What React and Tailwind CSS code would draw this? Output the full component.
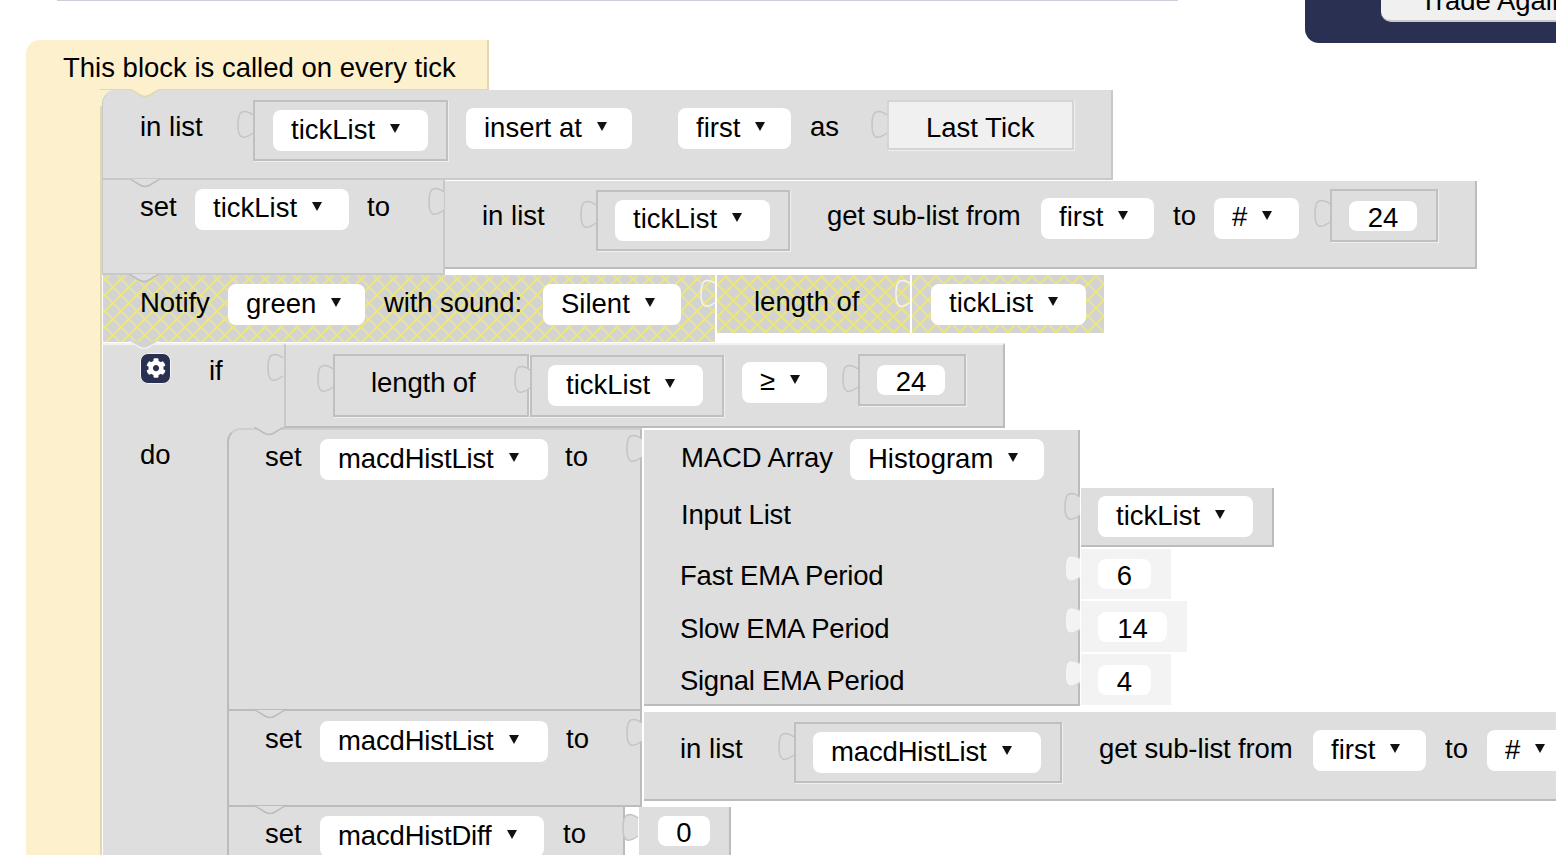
import React from 'react';
import { FaCog } from 'react-icons/fa';

const patternBg =
    'bg-[#d3d3d3] bg-[image:repeating-linear-gradient(45deg,#e8e48e_0,#e8e48e_2px,transparent_2px,transparent_11.3px),repeating-linear-gradient(-45deg,#e8e48e_0,#e8e48e_2px,transparent_2px,transparent_11.3px)]';

const Block = ({ className = '', children }) => (
    <div className={`relative shrink-0 flex bg-[#dedede] border-r-2 border-b-2 border-[#bcbcbc] ${className}`}>
        {children}
    </div>
);

const Inset = ({ className = '', children }) => (
    <div className={`relative shrink-0 flex items-center border-2 shadow-[1px_1px_0_#efefef] ${className}`}>
        {children}
        <Tab className="-left-[18px] top-[6px]" />
    </div>
);

const Label = ({ className = '', children }) => (
    <span className={`shrink-0 whitespace-nowrap pb-[5px] ${className}`}>{children}</span>
);

const Field = ({ className = '', children }) => (
    <div className={`shrink-0 flex items-center h-[41px] pl-[18px] bg-white rounded-lg whitespace-nowrap ${className}`}>
        <span className="pb-[3px]">{children}</span>
        <svg className="w-[10px] h-[9px] ml-[15px] mb-[5px]" viewBox="0 0 10 9">
            <polygon points="0,0 10,0 5,9" fill="#111" />
        </svg>
    </div>
);

const Num = ({ className = '', children }) => (
    <div className={`shrink-0 flex items-center justify-center h-[30px] pt-[3px] bg-white rounded-lg ${className}`}>
        {children}
    </div>
);

// puzzle tab on the left edge of a value block
const Tab = ({ className = '', fill = '#dedede', stroke = '#c4c4c4' }) => (
    <svg className={`absolute w-[17px] h-[30px] ${className}`} viewBox="0 0 17 30">
        <path d="M16 7 C12 4 8 3 5 4 C2 5 1 12 1 17 C1 23 2 28 5 29 C8 30 12 28 16 25 Z" fill={fill} />
        <path d="M16 7 C12 4 8 3 5 4 C2 5 1 12 1 17 C1 23 2 28 5 29 C8 30 12 28 16 25" fill="none" stroke={stroke} strokeWidth="1.5" />
    </svg>
);

// notch on the top edge of a statement block
const Notch = ({ className = '', fill = '#dedede', stroke = '#bcbcbc' }) => (
    <svg className={`absolute w-[30px] h-[9px] ${className}`} viewBox="0 0 30 9">
        <path d="M0 0 L10 6 Q15 9 20 6 L30 0 Z" fill={fill} />
        <path d="M0 0 L10 6 Q15 9 20 6 L30 0" fill="none" stroke={stroke} strokeWidth="1.5" />
    </svg>
);

const NumValue = ({ className = '', fieldWidth, children }) => (
    <div className={`relative flex items-center pl-[17px] bg-[#f3f3f3] ${className}`}>
        <Num className={fieldWidth}>{children}</Num>
        <Tab className="-left-[17px] top-[3px]" fill="#f3f3f3" stroke="#dcdcdc" />
    </div>
);

const App = () => {
    return (
        <div className="relative w-[1556px] h-[855px] overflow-hidden bg-white text-[27.5px] leading-[27px] text-black font-['Liberation_Sans',sans-serif]">
            {/* top of the page above the workspace */}
            <div className="flex justify-between h-[40px] pl-[57px]">
                <div className="w-[1121px] h-px bg-[#cfcfdc]" />
                <div className="w-[251px] h-[43px] pl-[76px] bg-[#2a3052] rounded-bl-[14px]">
                    <div className="flex items-end h-[22px] pl-[39px] pb-[6px] bg-[#f0f0f0] border-b-2 border-[#c8c8c8] rounded-bl-[10px] overflow-hidden">
                        <span className="whitespace-nowrap">Trade Again</span>
                    </div>
                </div>
            </div>

            <div className="ml-[26px]">
                {/* hat block */}
                <div className="flex items-center w-[463px] h-[50px] pl-[37px] pt-[4px] bg-[#fdf0cd] rounded-tl-[14px] border-r-2 border-[#e3d7b2]">
                    <span className="whitespace-nowrap">This block is called on every tick</span>
                </div>

                <div className="flex">
                    <div className="relative shrink-0 w-[76px] bg-[#fdf0cd] border-r-2 border-[#e3d7b2]">
                        <div className="absolute -right-[16px] top-0 w-[16px] h-[16px] bg-[#fdf0cd]" />
                        <div className="absolute left-[74px] -top-px w-[387px] h-px bg-[#e3d7b2]" />
                    </div>

                    <div className="flex flex-col w-max">
                        {/* in list ... insert at */}
                        <Block className="w-[1011px] h-[90px] items-center pl-[37px] pb-[11px] rounded-tl-[14px] border-l border-[#c9c9c9]">
                            <Label className="w-[113px]">in list</Label>
                            <Inset className="w-[195px] h-[61px] mt-[4px] pl-[18px] border-[#c0c0c0]">
                                <Field className="w-[155px]">tickList</Field>
                            </Inset>
                            <Field className="w-[166px] ml-[18px]">insert at</Field>
                            <Field className="w-[113px] ml-[46px]">first</Field>
                            <Label className="w-[77px] ml-[19px]">as</Label>
                            <Inset className="w-[187px] h-[50px] mb-[7px] pl-[37px] bg-[#f0f0f0] border-[#d4d4d4]">
                                <span className="mt-[4px] whitespace-nowrap">Last Tick</span>
                            </Inset>
                            <Notch className="left-[27px] -top-px" fill="#fdf0cd" stroke="#e3d7b2" />
                        </Block>

                        {/* set tickList */}
                        <div className="flex items-start h-[95px]">
                            <Block className="w-[343px] h-[95px] items-center pl-[37px] pb-[35px] border-l border-[#c9c9c9]">
                                <Label className="w-[55px]">set</Label>
                                <Field className="w-[154px]">tickList</Field>
                                <Label className="ml-[18px]">to</Label>
                                <Notch className="left-[27px] -top-px" />
                            </Block>
                            <Block className="w-[1032px] h-[88px] mt-px items-center pl-[37px] pb-[12px]">
                                <Label className="w-[114px]">in list</Label>
                                <Inset className="w-[194px] h-[61px] mt-[4px] pl-[17px] border-[#c0c0c0]">
                                    <Field className="w-[155px]">tickList</Field>
                                </Inset>
                                <Label className="w-[214px] ml-[37px] tracking-[-0.12px]">get sub-list from</Label>
                                <Field className="w-[113px]">first</Field>
                                <Label className="w-[41px] ml-[19px]">to</Label>
                                <Field className="w-[85px]">#</Field>
                                <Inset className="w-[108px] h-[53px] ml-[31px] mb-[5px] pl-[17px] border-[#c0c0c0]">
                                    <Num className="w-[68px]">24</Num>
                                </Inset>
                                <Tab className="-left-[17px] top-[4px]" />
                            </Block>
                        </div>

                        {/* notify, the hatched blocks are disabled */}
                        <div className="flex items-start h-[68px] ml-px">
                            <div className={`relative shrink-0 flex items-center w-[612px] h-[67px] pl-[37px] pb-[8px] ${patternBg}`}>
                                <Label className="w-[88px] tracking-[-0.1px]">Notify</Label>
                                <Field className="w-[137px]">green</Field>
                                <Label className="w-[159px] ml-[19px] tracking-[-0.1px]">with sound:</Label>
                                <Field className="w-[138px]">Silent</Field>
                                <Notch className="left-[26px] -top-px" />
                                <Notch className="left-[26px] -bottom-[8px]" fill="#d3d3d3" stroke="#f0f0f0" />
                            </div>
                            <div className={`relative shrink-0 flex items-center w-[193px] h-[58px] ml-[2px] pl-[37px] ${patternBg}`}>
                                <Label>length of</Label>
                                <Tab className="-left-[17px] top-[2px]" fill="transparent" stroke="#f4f4f4" />
                            </div>
                            <div className={`relative shrink-0 flex items-center w-[192px] h-[58px] ml-[2px] pl-[19px] ${patternBg}`}>
                                <Field className="w-[155px]">tickList</Field>
                                <Tab className="-left-[17px] top-[2px]" fill="transparent" stroke="#f4f4f4" />
                            </div>
                        </div>

                        {/* if / do */}
                        <div className="flex items-start ml-px h-[85px]">
                            <div className="shrink-0 flex items-center w-[181px] h-[85px] pl-[37px] pb-[37px] bg-[#dedede] border-t-2 border-[#f2f2f2]">
                                <div className="flex items-center justify-center w-[31px] h-[31px] bg-[#2a3052] border border-[#f4f4f4] rounded-lg">
                                    <FaCog className="w-[20px] h-[20px] text-white" />
                                </div>
                                <span className="ml-[38px] mt-[5px]">if</span>
                            </div>
                            <Block className="w-[721px] h-[85px] items-center pl-[47px] border-t-2 border-l-2 border-t-[#f2f2f2] border-l-[#c8c8c8]">
                                <Tab className="-left-[19px] top-[6px]" />
                                <Inset className="w-[196px] h-[63px] pl-[36px] border-[#c0c0c0]">
                                    <span className="pb-[7px] whitespace-nowrap tracking-[-0.1px]">length of</span>
                                </Inset>
                                <Inset className="w-[194px] h-[62px] ml-px pl-[16px] border-[#c0c0c0]">
                                    <Field className="w-[155px]">tickList</Field>
                                </Inset>
                                <Field className="w-[85px] ml-[18px] mb-[7px]">≥</Field>
                                <Inset className="w-[108px] h-[52px] ml-[31px] mb-[12px] pl-[17px] border-[#c0c0c0]">
                                    <Num className="w-[68px]">24</Num>
                                </Inset>
                            </Block>
                        </div>

                        <div className="flex">
                            <div className="shrink-0 w-[126px] ml-px pl-[37px] pt-[13px] bg-[#dedede] border-r-2 border-[#bcbcbc]">
                                do
                            </div>

                            <div className="flex flex-col">
                                {/* set macdHistList to MACD Array */}
                                <div className="relative flex items-start h-[283px] -ml-[2px]">
                                    <div className="absolute left-0 top-0 w-[16px] h-[16px] bg-[#dedede]" />
                                    <Block className="w-[415px] h-[283px] items-start pl-[36px] pt-[11px] rounded-tl-[14px] border-l-2 border-t-2 border-t-[#cfcfcf]">
                                        <Label className="w-[55px] mt-[2px]">set</Label>
                                        <Field className="w-[228px] -mt-[2px] tracking-[-0.15px]">macdHistList</Field>
                                        <Label className="ml-[17px] mt-[2px]">to</Label>
                                        <Notch className="left-[25px] -top-[3px]" />
                                    </Block>
                                    <div className="relative shrink-0 w-[436px] h-[276px] ml-[2px] mt-[2px] bg-[#dedede] border-r-2 border-b-2 border-[#bcbcbc]">
                                        <Tab className="-left-[18px] top-[2px]" />
                                        <div className="flex items-center h-[41px] mt-[9px] pl-[37px]">
                                            <Label className="w-[169px] tracking-[-0.1px]">MACD Array</Label>
                                            <Field className="w-[194px]">Histogram</Field>
                                        </div>
                                        <div className="flex flex-col pl-[36px] pt-[18px] tracking-[-0.2px]">
                                            <span className="h-[64px] pt-[3px] pl-px">Input List</span>
                                            <span className="h-[53px]">Fast EMA Period</span>
                                            <span className="h-[52px]">Slow EMA Period</span>
                                            <span className="tracking-[-0.3px]">Signal EMA Period</span>
                                        </div>
                                    </div>
                                    <div className="flex flex-col gap-[2px] ml-px pt-[60px]">
                                        <Block className="w-[193px] h-[59px] items-center pl-[17px]">
                                            <Field className="w-[155px]">tickList</Field>
                                            <Tab className="-left-[17px] top-[2px]" />
                                        </Block>
                                        <NumValue className="w-[90px] h-[50px]" fieldWidth="w-[53px]">6</NumValue>
                                        <NumValue className="w-[106px] h-[51px]" fieldWidth="w-[69px]">14</NumValue>
                                        <NumValue className="w-[90px] h-[51px]" fieldWidth="w-[53px]">4</NumValue>
                                    </div>
                                </div>

                                {/* set macdHistList to sub-list */}
                                <div className="flex items-start h-[96px]">
                                    <Block className="w-[413px] h-[96px] items-start pl-[36px] pt-[10px]">
                                        <Label className="w-[55px] mt-[4px]">set</Label>
                                        <Field className="w-[228px] tracking-[-0.15px]">macdHistList</Field>
                                        <Label className="ml-[18px] mt-[4px]">to</Label>
                                        <Notch className="left-[26px] -top-px" />
                                    </Block>
                                    <Block className="w-[920px] h-[89px] ml-[2px] mt-px items-center pl-[36px] pb-[10px]">
                                        <Tab className="-left-[18px] top-[4px]" />
                                        <Label className="w-[114px]">in list</Label>
                                        <Inset className="w-[268px] h-[61px] mt-[4px] pl-[17px] border-[#c0c0c0]">
                                            <Field className="w-[228px] tracking-[-0.15px]">macdHistList</Field>
                                        </Inset>
                                        <Label className="w-[214px] ml-[37px] tracking-[-0.12px]">get sub-list from</Label>
                                        <Field className="w-[113px]">first</Field>
                                        <Label className="w-[42px] ml-[19px]">to</Label>
                                        <Field className="w-[85px]">#</Field>
                                    </Block>
                                </div>

                                {/* set macdHistDiff to 0 */}
                                <div className="flex items-start">
                                    <Block className="w-[396px] h-[60px] items-start pl-[36px] pt-[9px]">
                                        <Label className="w-[55px] mt-[4px]">set</Label>
                                        <Field className="w-[224px] tracking-[-0.15px]">macdHistDiff</Field>
                                        <Label className="ml-[19px] mt-[4px]">to</Label>
                                        <Notch className="left-[26px] -top-px" />
                                    </Block>
                                    <Block className="w-[92px] h-[60px] ml-[14px] items-start pl-[19px] pt-[9px]">
                                        <Num className="w-[52px]">0</Num>
                                        <Tab className="-left-[17px] top-[4px]" />
                                    </Block>
                                </div>
                            </div>
                        </div>
                    </div>
                </div>
            </div>
        </div>
    );
};

export default App;
